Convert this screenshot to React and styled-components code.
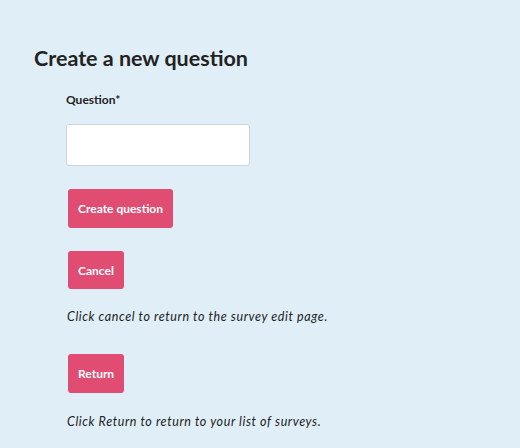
import React from "react";
import styled, { createGlobalStyle } from "styled-components";

const Global = createGlobalStyle`
  html, body { margin: 0; padding: 0; background: #e0eff7; }
  body { font-family: "Lato", "Noto Sans", sans-serif; color: #222; }
`;

const Page = styled.main`
  min-height: 448px;
  box-sizing: border-box;
  padding: 43px 34px 0;
`;

const Title = styled.h1`
  margin: 0;
  font-size: 21.5px;
  line-height: 30px;
  font-weight: 700;
  letter-spacing: 0;
  color: #222;
`;

const Form = styled.form`
  display: flex;
  flex-direction: column;
  align-items: flex-start;
  padding-left: 32px;
`;

const Label = styled.label`
  margin-top: 19px;
  font-size: 12px;
  font-weight: 700;
  line-height: 16px;
  color: #222;
`;

const Input = styled.input`
  margin-top: 16px;
  width: 184px;
  height: 42px;
  box-sizing: border-box;
  border: 1px solid #cdd5db;
  border-radius: 3px;
  background: #fff;
`;

const Button = styled.button`
  margin-top: ${(p) => p.$mt}px;
  margin-left: 2px;
  height: ${(p) => p.$h}px;
  padding: 0 10px;
  border: none;
  border-radius: 3px;
  background: #e04c72;
  color: #fff;
  font-family: inherit;
  font-size: 12px;
  font-weight: 700;
  letter-spacing: 0;
`;

const Note = styled.p`
  margin: ${(p) => p.$mt}px 0 0 1px;
  font-size: 12.5px;
  line-height: 17px;
  font-style: italic;
  color: #222;
  letter-spacing: 0.6px;
`;

export default function App() {
  return (
    <>
      <Global />
      <Page>
        <Title>Create a new question</Title>
        <Form onSubmit={(e) => e.preventDefault()}>
          <Label htmlFor="q">Question*</Label>
          <Input id="q" type="text" />
          <Button type="submit" $mt={23} $h={39}>Create question</Button>
          <Button type="button" $mt={23} $h={38}>Cancel</Button>
          <Note $mt={19}>Click cancel to return to the survey edit page.</Note>
          <Button type="button" $mt={29} $h={39}>Return</Button>
          <Note $mt={20}>Click Return to return to your list of surveys.</Note>
        </Form>
      </Page>
    </>
  );
}
